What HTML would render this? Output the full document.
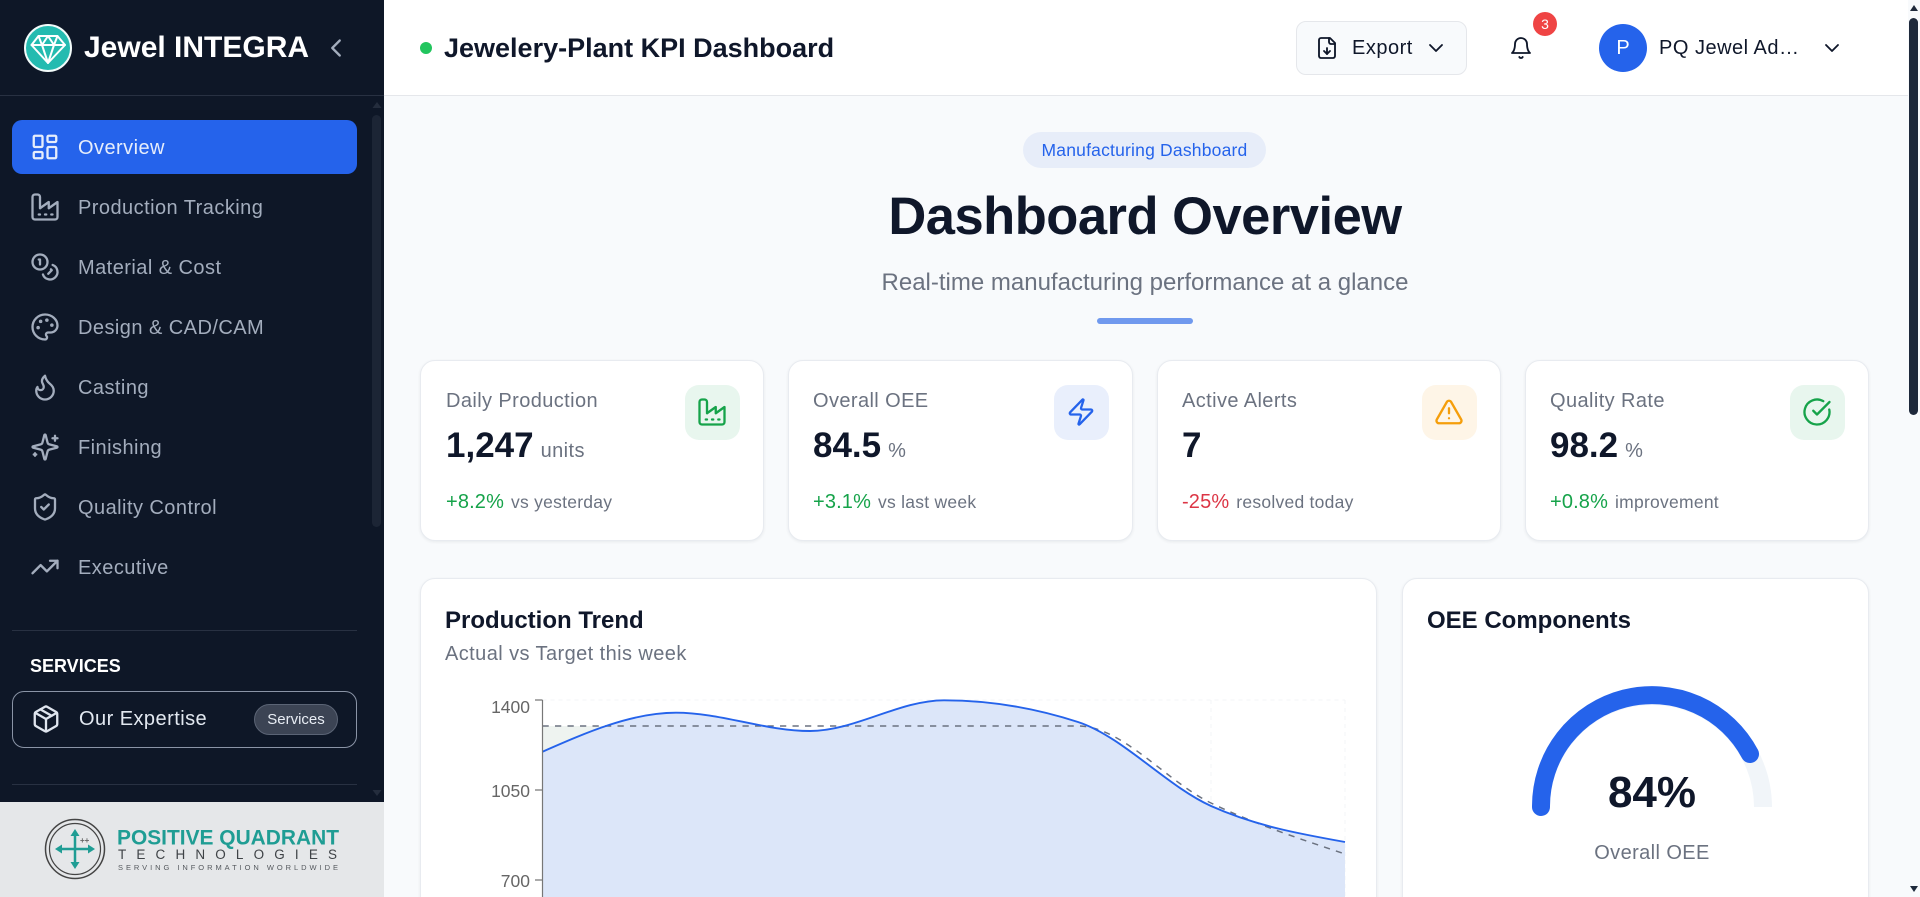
<!DOCTYPE html>
<html lang="en">
<head>
<meta charset="utf-8">
<title>Jewelery-Plant KPI Dashboard</title>
<style>
*{box-sizing:border-box;margin:0;padding:0}
html,body{width:1920px;height:897px;overflow:hidden;background:#f8fafc;font-family:"Liberation Sans",Arial,sans-serif}
#root{position:absolute;left:0;top:0;width:1920px;height:897px;overflow:hidden;background:#f8fafc}
.a{position:absolute;white-space:nowrap}
svg.i{position:absolute;fill:none;stroke:currentColor;stroke-width:1.85;stroke-linecap:round;stroke-linejoin:round}
.nav{position:absolute;left:78px;font-size:20px;line-height:30px;color:#a3adbd;white-space:nowrap;letter-spacing:.45px}
.card{position:absolute;background:#fff;border:1px solid #e8ebf0;border-radius:15px;box-shadow:0 1px 3px rgba(15,23,42,.07)}
.tile{position:absolute;width:55px;height:55px;border-radius:14px}
.lab{position:absolute;font-size:20px;line-height:30px;color:#6b7280;white-space:nowrap;letter-spacing:.4px}
.val{position:absolute;font-size:35px;line-height:44px;font-weight:700;color:#0f172a;white-space:nowrap}
.unit{font-size:20px;font-weight:400;color:#6b7280;margin-left:7px;letter-spacing:.4px}
.tr{position:absolute;font-size:20px;line-height:28px;white-space:nowrap;letter-spacing:.15px}
.tr span{font-size:17.5px;color:#6b7280;margin-left:7px;letter-spacing:.25px}
</style>
</head>
<body>
<div id="root">

<!-- Main header -->
<div class="a" style="left:384px;top:0;width:1524px;height:96px;background:#fff;border-bottom:1px solid #e5e7eb"></div>
<div class="a" style="left:420px;top:42px;width:12px;height:12px;border-radius:50%;background:#22c55e"></div>
<div class="a" style="left:444px;top:29px;font-size:27px;line-height:38px;font-weight:700;color:#0f172a">Jewelery-Plant KPI Dashboard</div>

<div class="a" style="left:1296px;top:21px;width:171px;height:54px;background:#f8fafc;border:1px solid #e5e7eb;border-radius:10px"></div>
<svg class="i" viewBox="0 0 24 24" style="left:1315px;top:36px;width:24px;height:24px;color:#0f172a"><path d="M15 2H6a2 2 0 0 0-2 2v16a2 2 0 0 0 2 2h12a2 2 0 0 0 2-2V7Z"/><path d="M14 2v4a2 2 0 0 0 2 2h4"/><path d="M12 18v-6"/><path d="m9 15 3 3 3-3"/></svg>
<div class="a" style="left:1352px;top:34px;font-size:20px;line-height:28px;color:#0f172a;letter-spacing:.5px">Export</div>
<svg class="i" viewBox="0 0 24 24" style="left:1424px;top:36px;width:24px;height:24px;color:#0f172a"><path d="m6 9 6 6 6-6"/></svg>

<svg class="i" viewBox="0 0 24 24" style="left:1509px;top:36px;width:24px;height:24px;color:#0f172a"><path d="M6 8a6 6 0 0 1 12 0c0 7 3 9 3 9H3s3-2 3-9"/><path d="M10.3 21a1.94 1.94 0 0 0 3.4 0"/></svg>
<div class="a" style="left:1533px;top:12px;width:24px;height:24px;border-radius:50%;background:#ef4444;color:#fff;font-size:14px;line-height:24px;text-align:center">3</div>

<div class="a" style="left:1599px;top:24px;width:48px;height:48px;border-radius:50%;background:#2563eb;color:#fff;font-size:20px;line-height:48px;text-align:center">P</div>
<div class="a" style="left:1659px;top:34px;font-size:20px;line-height:28px;color:#0f172a;letter-spacing:.5px">PQ Jewel Ad…</div>
<svg class="i" viewBox="0 0 24 24" style="left:1820px;top:36px;width:24px;height:24px;color:#0f172a"><path d="m6 9 6 6 6-6"/></svg>

<!-- Hero -->
<div class="a" style="left:1023px;top:132px;width:243px;height:36px;border-radius:18px;background:#e7edf9;color:#2563eb;font-size:17.5px;line-height:36px;text-align:center;letter-spacing:.2px">Manufacturing Dashboard</div>
<div class="a" style="left:384px;width:1524px;top:183px;text-align:center;font-size:52.5px;line-height:68px;font-weight:700;color:#0f172a;letter-spacing:-.5px;padding-right:2px">Dashboard Overview</div>
<div class="a" style="left:384px;width:1524px;top:267px;text-align:center;font-size:24px;line-height:32px;color:#6b7280;padding-right:2px">Real-time manufacturing performance at a glance</div>
<div class="a" style="left:1097px;top:318px;width:96px;height:6px;border-radius:3px;background:#7099ee"></div>

<!-- KPI cards -->
<div class="card" style="left:420px;top:360px;width:344px;height:181px"></div>
<div class="lab" style="left:446px;top:386px">Daily Production</div>
<div class="val" style="left:446px;top:424px">1,247<span class="unit">units</span></div>
<div class="tr" style="left:446px;top:488px;color:#16a34a">+8.2%<span>vs yesterday</span></div>
<div class="tile" style="left:685px;top:385px;background:#e8f6ee"></div>
<svg class="i" viewBox="0 0 24 24" style="left:697px;top:397px;width:30px;height:30px;color:#16a34a"><path d="M2 20a2 2 0 0 0 2 2h16a2 2 0 0 0 2-2V8l-7 5V8l-7 5V4a2 2 0 0 0-2-2H4a2 2 0 0 0-2 2Z"/><path d="M17 18h1"/><path d="M12 18h1"/><path d="M7 18h1"/></svg>

<div class="card" style="left:788px;top:360px;width:345px;height:181px"></div>
<div class="lab" style="left:813px;top:386px">Overall OEE</div>
<div class="val" style="left:813px;top:424px">84.5<span class="unit">%</span></div>
<div class="tr" style="left:813px;top:488px;color:#16a34a">+3.1%<span>vs last week</span></div>
<div class="tile" style="left:1054px;top:385px;background:#e9effc"></div>
<svg class="i" viewBox="0 0 24 24" style="left:1066px;top:397px;width:30px;height:30px;color:#2563eb"><path d="M4 14a1 1 0 0 1-.78-1.63l9.9-10.2a.5.5 0 0 1 .86.46l-1.92 6.02A1 1 0 0 0 13 10h7a1 1 0 0 1 .78 1.63l-9.9 10.2a.5.5 0 0 1-.86-.46l1.92-6.02A1 1 0 0 0 11 14z"/></svg>

<div class="card" style="left:1157px;top:360px;width:344px;height:181px"></div>
<div class="lab" style="left:1182px;top:386px">Active Alerts</div>
<div class="val" style="left:1182px;top:424px">7</div>
<div class="tr" style="left:1182px;top:488px;color:#dc3545">-25%<span>resolved today</span></div>
<div class="tile" style="left:1422px;top:385px;background:#fef5e7"></div>
<svg class="i" viewBox="0 0 24 24" style="left:1434px;top:397px;width:30px;height:30px;color:#f59e0b"><path d="m21.73 18-8-14a2 2 0 0 0-3.48 0l-8 14A2 2 0 0 0 4 21h16a2 2 0 0 0 1.73-3"/><path d="M12 9v4"/><path d="M12 17h.01"/></svg>

<div class="card" style="left:1525px;top:360px;width:344px;height:181px"></div>
<div class="lab" style="left:1550px;top:386px">Quality Rate</div>
<div class="val" style="left:1550px;top:424px">98.2<span class="unit">%</span></div>
<div class="tr" style="left:1550px;top:488px;color:#16a34a">+0.8%<span>improvement</span></div>
<div class="tile" style="left:1790px;top:385px;background:#e8f6ee"></div>
<svg class="i" viewBox="0 0 24 24" style="left:1802px;top:397px;width:30px;height:30px;color:#16a34a"><path d="M21.801 10A10 10 0 1 1 17 3.335"/><path d="m9 11 3 3L22 4"/></svg>

<!-- Chart cards -->
<div class="card" style="left:420px;top:578px;width:957px;height:340px"></div>
<div class="a" style="left:445px;top:606px;font-size:24px;line-height:30px;font-weight:700;color:#0f172a">Production Trend</div>
<div class="a" style="left:445px;top:640px;font-size:20px;line-height:28px;color:#6b7280;letter-spacing:.42px">Actual vs Target this week</div>

<div class="card" style="left:1402px;top:578px;width:467px;height:340px"></div>
<div class="a" style="left:1427px;top:606px;font-size:24px;line-height:30px;font-weight:700;color:#0f172a">OEE Components</div>

<svg class="a" width="1920" height="897" viewBox="0 0 1920 897" style="left:0;top:0;pointer-events:none">
  <!-- grid -->
  <path d="M542.5 700H1345M1211 700V897M1345 700V897" fill="none" stroke="#f3f4f7" stroke-width="1" stroke-dasharray="4 4"/>
  <!-- target area sliver -->
  <path d="M542.5 726H606L542.5 751.7Z" fill="#eef3f0"/>
  <!-- actual area -->
  <path d="M542.5 751.7C587 732.2 631.5 712.7 676 712.7C720.7 712.7 765.3 731 810 731C854.7 731 899.3 700.3 944 700.3C988.7 700.3 1033.3 707.5 1078 722C1122.3 736.4 1166.7 786 1211 806C1255.7 826 1300.3 834 1345 842V897H542.5Z" fill="#dce6f9"/>
  <!-- target line -->
  <path d="M542.5 726H1078C1122.3 726 1166.7 781.7 1211 803C1255.7 824.5 1300.3 839 1345 854" fill="none" stroke="#6b7280" stroke-width="1.5" stroke-dasharray="6.25 6.25"/>
  <!-- actual line -->
  <path d="M542.5 751.7C587 732.2 631.5 712.7 676 712.7C720.7 712.7 765.3 731 810 731C854.7 731 899.3 700.3 944 700.3C988.7 700.3 1033.3 707.5 1078 722C1122.3 736.4 1166.7 786 1211 806C1255.7 826 1300.3 834 1345 842" fill="none" stroke="#2563eb" stroke-width="1.9"/>
  <!-- axis -->
  <path d="M542.5 700V897M535 700H542.5M535 790H542.5M535 880H542.5" fill="none" stroke="#777" stroke-width="1.2"/>
  <g font-family="'Liberation Sans',Arial,sans-serif" font-size="17.5" fill="#666" text-anchor="end">
    <text x="530" y="713">1400</text>
    <text x="530" y="797">1050</text>
    <text x="530" y="887">700</text>
  </g>
  <!-- gauge -->
  <path d="M1541 807A111 111 0 0 1 1763 807" fill="none" stroke="#f1f5f9" stroke-width="18"/>
  <path d="M1541 807A111 111 0 0 1 1750 754" fill="none" stroke="#2563eb" stroke-width="18" stroke-linecap="round"/>
  <text x="1652" y="807" font-family="'Liberation Sans',Arial,sans-serif" font-size="44" font-weight="700" fill="#0f172a" text-anchor="middle">84%</text>
  <text x="1652" y="859" font-family="'Liberation Sans',Arial,sans-serif" font-size="20" letter-spacing=".4" fill="#6b7280" text-anchor="middle">Overall OEE</text>
</svg>

<!-- Page scrollbar -->
<div class="a" style="left:1908px;top:0;width:12px;height:897px;background:#f8fafc"></div>
<div class="a" style="left:1909px;top:18px;width:9px;height:397px;border-radius:5px;background:#1e293b"></div>
<svg class="a" width="12" height="897" style="left:1908px;top:0"><path d="M2 11L6 5L10 11Z" fill="#1e293b"/><path d="M2 886H10L6 892Z" fill="#1e293b"/></svg>

<!-- Sidebar -->
<div class="a" style="left:0;top:0;width:384px;height:897px;background:#0e1727"></div>
<div class="a" style="left:0;top:95px;width:384px;height:1px;background:#283142"></div>

<svg class="a" width="48" height="48" viewBox="0 0 48 48" style="left:24px;top:24px">
  <circle cx="24" cy="24" r="23" fill="#24bbb0" stroke="#f2fbfa" stroke-width="2"/>
  <g fill="none" stroke="#fff" stroke-width="2" stroke-linejoin="round" stroke-linecap="round">
    <path d="M14.5 12H33.5L41 21L24 39L7.500 21Z"/>
    <path d="M7.500 21H41"/>
    <path d="M14.5 12L18 21L24 12L30 21L33.5 12"/>
    <path d="M18 21L24 39L30 21"/>
  </g>
</svg>
<div class="a" style="left:84px;top:29px;font-size:30px;line-height:38px;font-weight:700;color:#fff">Jewel INTEGRA</div>
<svg class="i" viewBox="0 0 24 24" style="left:321px;top:33px;width:30px;height:30px;color:#a3adbd"><path d="m15 18-6-6 6-6"/></svg>

<!-- Sidebar scrollbar -->
<div class="a" style="left:372px;top:115px;width:9px;height:412px;border-radius:5px;background:#1c2535"></div>
<svg class="a" width="12" height="12" style="left:371px;top:100px"><path d="M1.500 8L6 2L10.500 8Z" fill="#242d3d"/></svg>
<svg class="a" width="12" height="12" style="left:371px;top:788px"><path d="M1.500 2H10.500L6 8Z" fill="#242d3d"/></svg>

<div class="a" style="left:12px;top:120px;width:345px;height:54px;border-radius:10px;background:#2563eb"></div>
<svg class="i" viewBox="0 0 24 24" style="left:30px;top:132px;width:30px;height:30px;color:#e6edfb"><rect x="3" y="3" width="7" height="9" rx="1"/><rect x="14" y="3" width="7" height="5" rx="1"/><rect x="14" y="12" width="7" height="9" rx="1"/><rect x="3" y="16" width="7" height="5" rx="1"/></svg>
<div class="nav" style="top:133px;color:#e6edfb">Overview</div>

<svg class="i" viewBox="0 0 24 24" style="left:30px;top:192px;width:30px;height:30px;color:#a3adbd"><path d="M2 20a2 2 0 0 0 2 2h16a2 2 0 0 0 2-2V8l-7 5V8l-7 5V4a2 2 0 0 0-2-2H4a2 2 0 0 0-2 2Z"/><path d="M17 18h1"/><path d="M12 18h1"/><path d="M7 18h1"/></svg>
<div class="nav" style="top:193px">Production Tracking</div>

<svg class="i" viewBox="0 0 24 24" style="left:30px;top:252px;width:30px;height:30px;color:#a3adbd"><circle cx="8" cy="8" r="6"/><path d="M18.090 10.370A6 6 0 1 1 10.340 18"/><path d="M7 6h1v4"/><path d="m16.710 13.880.7.71-2.820 2.820"/></svg>
<div class="nav" style="top:253px">Material &amp; Cost</div>

<svg class="i" viewBox="0 0 24 24" style="left:30px;top:312px;width:30px;height:30px;color:#a3adbd"><circle cx="13.500" cy="6.500" r=".5" fill="currentColor"/><circle cx="17.500" cy="10.500" r=".5" fill="currentColor"/><circle cx="8.500" cy="7.500" r=".5" fill="currentColor"/><circle cx="6.500" cy="12.500" r=".5" fill="currentColor"/><path d="M12 2C6.500 2 2 6.500 2 12s4.500 10 10 10c.926 0 1.648-.746 1.648-1.688 0-.437-.18-.835-.437-1.125-.29-.289-.438-.652-.438-1.125a1.640 1.640 0 0 1 1.668-1.668h1.996c3.051 0 5.555-2.503 5.555-5.554C21.965 6.012 17.461 2 12 2z"/></svg>
<div class="nav" style="top:313px">Design &amp; CAD/CAM</div>

<svg class="i" viewBox="0 0 24 24" style="left:30px;top:372px;width:30px;height:30px;color:#a3adbd"><path d="M8.500 14.500A2.500 2.500 0 0 0 11 12c0-1.380-.5-2-1-3-1.072-2.143-.224-4.054 2-6 .5 2.500 2 4.900 4 6.500 2 1.600 3 3.500 3 5.500a7 7 0 1 1-14 0c0-1.153.433-2.294 1-3a2.500 2.500 0 0 0 2.500 2.500z"/></svg>
<div class="nav" style="top:373px">Casting</div>

<svg class="i" viewBox="0 0 24 24" style="left:30px;top:432px;width:30px;height:30px;color:#a3adbd"><path d="M9.937 15.500A2 2 0 0 0 8.500 14.063l-6.135-1.582a.5.5 0 0 1 0-.962L8.500 9.936A2 2 0 0 0 9.937 8.500l1.582-6.135a.5.5 0 0 1 .963 0L14.063 8.500A2 2 0 0 0 15.500 9.937l6.135 1.581a.5.5 0 0 1 0 .964L15.500 14.063a2 2 0 0 0-1.437 1.437l-1.582 6.135a.5.5 0 0 1-.963 0z"/><path d="M20 3v4"/><path d="M22 5h-4"/><path d="M4 17v2"/><path d="M5 18H3"/></svg>
<div class="nav" style="top:433px">Finishing</div>

<svg class="i" viewBox="0 0 24 24" style="left:30px;top:492px;width:30px;height:30px;color:#a3adbd"><path d="M20 13c0 5-3.500 7.500-7.660 8.950a1 1 0 0 1-.67-.01C7.500 20.500 4 18 4 13V6a1 1 0 0 1 1-1c2 0 4.500-1.200 6.240-2.720a1.170 1.170 0 0 1 1.520 0C14.510 3.810 17 5 19 5a1 1 0 0 1 1 1z"/><path d="m9 12 2 2 4-4"/></svg>
<div class="nav" style="top:493px">Quality Control</div>

<svg class="i" viewBox="0 0 24 24" style="left:30px;top:552px;width:30px;height:30px;color:#a3adbd"><polyline points="22 7 13.500 15.500 8.500 10.500 2 17"/><polyline points="16 7 22 7 22 13"/></svg>
<div class="nav" style="top:553px">Executive</div>

<div class="a" style="left:12px;top:630px;width:345px;height:1px;background:#283142"></div>
<div class="a" style="left:30px;top:654px;font-size:18px;line-height:24px;font-weight:700;color:#fff">SERVICES</div>
<div class="a" style="left:12px;top:691px;width:345px;height:57px;border:1px solid #8a94a6;border-radius:12px"></div>
<svg class="i" viewBox="0 0 24 24" style="left:31px;top:704px;width:30px;height:30px;color:#dfe5ee"><path d="M11 21.730a2 2 0 0 0 2 0l7-4A2 2 0 0 0 21 16V8a2 2 0 0 0-1-1.730l-7-4a2 2 0 0 0-2 0l-7 4A2 2 0 0 0 3 8v8a2 2 0 0 0 1 1.730z"/><path d="M12 22V12"/><polyline points="3.290 7 12 12 20.710 7"/><path d="m7.500 4.270 9 5.150"/></svg>
<div class="a" style="left:79px;top:704px;font-size:20px;line-height:30px;color:#e2e8f0;letter-spacing:.45px">Our Expertise</div>
<div class="a" style="left:254px;top:704px;width:84px;height:31px;border-radius:16px;background:#3c4454;border:1px solid #5b6475;color:#e8edf4;font-size:15px;line-height:29px;text-align:center">Services</div>
<div class="a" style="left:12px;top:784px;width:345px;height:1px;background:#283142"></div>

<!-- Partner logo -->
<div class="a" style="left:0;top:802px;width:384px;height:95px;background:#e5e7e9"></div>
<svg class="a" width="384" height="96" viewBox="0 801 384 96" style="left:0;top:801px">
  <circle cx="75" cy="849" r="29.500" fill="none" stroke="#444" stroke-width="1.500"/>
  <circle cx="75" cy="849" r="25.500" fill="none" stroke="#444" stroke-width="1.200"/>
  <path d="M75 834V864M60 849H90" stroke="#1f9d94" stroke-width="2.500" fill="none"/>
  <path d="M75 829L70.500 836H79.500ZM75 869L70.500 862H79.500ZM55 849L62 844.500V853.500ZM95 849L88 844.500V853.500Z" fill="#1f9d94"/>
  <text x="80" y="843" font-family="'Liberation Sans',Arial,sans-serif" font-size="8" font-weight="700" fill="#666">++</text>
  <text x="117" y="844.500" font-family="'Liberation Sans',Arial,sans-serif" font-size="21" font-weight="700" fill="#1f9d94" textLength="222" lengthAdjust="spacingAndGlyphs">POSITIVE QUADRANT</text>
  <text x="118" y="859" font-family="'Liberation Sans',Arial,sans-serif" font-size="13.500" fill="#3f4347" textLength="219" lengthAdjust="spacing">TECHNOLOGIES</text>
  <text x="118" y="870" font-family="'Liberation Sans',Arial,sans-serif" font-size="7.500" fill="#55595e" textLength="220" lengthAdjust="spacing">SERVING INFORMATION WORLDWIDE</text>
</svg>

</div>
</body>
</html>
